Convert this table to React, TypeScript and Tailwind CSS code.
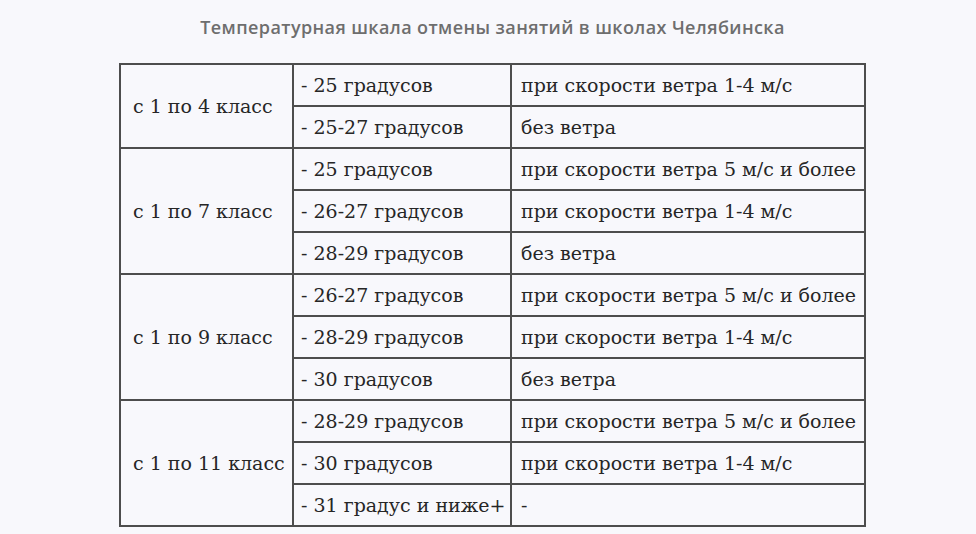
const groups = [
    {
        label: "с 1 по 4 класс",
        rows: [
            ["- 25 градусов", "при скорости ветра 1-4 м/с"],
            ["- 25-27 градусов", "без ветра"],
        ],
    },
    {
        label: "с 1 по 7 класс",
        rows: [
            ["- 25 градусов", "при скорости ветра 5 м/с и более"],
            ["- 26-27 градусов", "при скорости ветра 1-4 м/с"],
            ["- 28-29 градусов", "без ветра"],
        ],
    },
    {
        label: "с 1 по 9 класс",
        rows: [
            ["- 26-27 градусов", "при скорости ветра 5 м/с и более"],
            ["- 28-29 градусов", "при скорости ветра 1-4 м/с"],
            ["- 30 градусов", "без ветра"],
        ],
    },
    {
        label: "с 1 по 11 класс",
        rows: [
            ["- 28-29 градусов", "при скорости ветра 5 м/с и более"],
            ["- 30 градусов", "при скорости ветра 1-4 м/с"],
            ["- 31 градус и ниже+", "-"],
        ],
    },
];

export default function App() {
    return (
        <div className="flex min-h-[534px] w-full flex-col items-center bg-[#f8f8fc] pl-[9px] pt-[15px]">
            <h1 className="font-['Open_Sans',sans-serif] text-[18px] font-semibold leading-[24px] tracking-[0.4px] text-[#6e6e6e]">
                Температурная шкала отмены занятий в школах Челябинска
            </h1>
            <table className="mt-[24px] w-[747px] table-fixed border-collapse border-2 border-[#4d4d4d] font-['DejaVu_Serif',serif] text-[19px] leading-[24px] text-[#262626]">
                <colgroup>
                    <col className="w-[173px]" />
                    <col className="w-[218px]" />
                    <col />
                </colgroup>
                <tbody>
                    {groups.map((g) =>
                        g.rows.map((r, i) => (
                            <tr key={g.label + i} className="h-[42px]">
                                {i === 0 && (
                                    <td rowSpan={g.rows.length} className="whitespace-nowrap border-2 border-[#4d4d4d] pl-[12px] align-middle">
                                        {g.label}
                                    </td>
                                )}
                                <td className="whitespace-nowrap border-2 border-[#4d4d4d] pl-[7px] align-middle">{r[0]}</td>
                                <td className="whitespace-nowrap border-2 border-[#4d4d4d] pl-[9px] align-middle">{r[1]}</td>
                            </tr>
                        ))
                    )}
                </tbody>
            </table>
        </div>
    );
}
